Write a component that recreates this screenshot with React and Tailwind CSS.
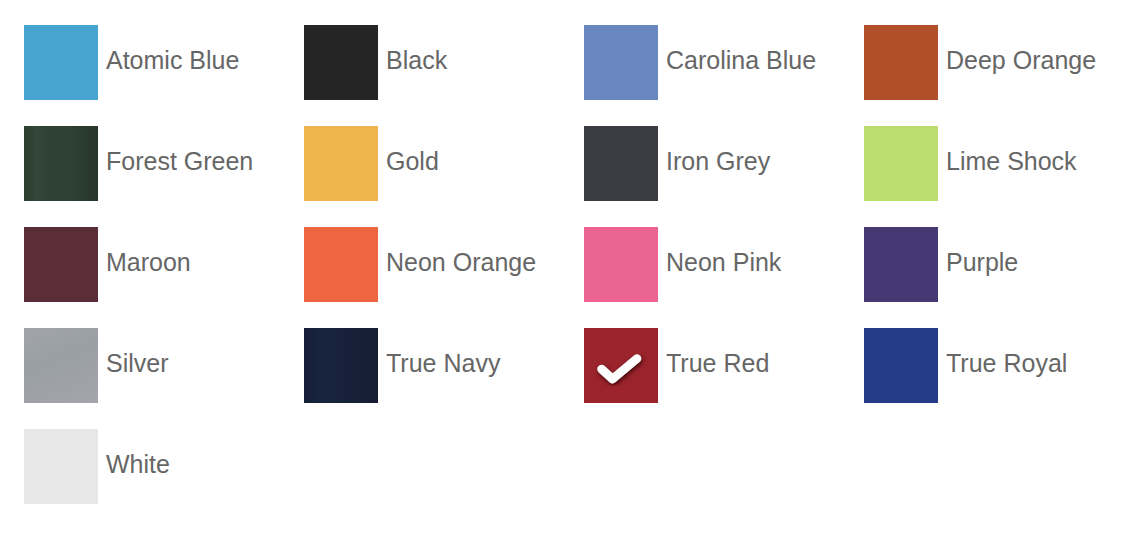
import React from 'react';

const colors = [
  { name: 'Atomic Blue', bg: 'bg-[#47a4d0]' },
  { name: 'Black', bg: 'bg-[#252525]' },
  { name: 'Carolina Blue', bg: 'bg-[#6887c0]' },
  { name: 'Deep Orange', bg: 'bg-[#b04f2a]' },
  { name: 'Forest Green', bg: 'bg-[linear-gradient(90deg,#2c3f2f_0%,#33473a_18%,#2d4031_35%,#2e4132_60%,#27372b_100%)]' },
  { name: 'Gold', bg: 'bg-[#f0b44f]' },
  { name: 'Iron Grey', bg: 'bg-[#3c3d42]' },
  { name: 'Lime Shock', bg: 'bg-[#bbdc6e]' },
  { name: 'Maroon', bg: 'bg-[#5a2d37]' },
  { name: 'Neon Orange', bg: 'bg-[#ee6541]' },
  { name: 'Neon Pink', bg: 'bg-[#ec6592]' },
  { name: 'Purple', bg: 'bg-[#463873]' },
  { name: 'Silver', bg: 'bg-[linear-gradient(160deg,#a1a5ab_0%,#9a9ea5_40%,#9ea2a8_70%,#a3a7ad_100%)]' },
  { name: 'True Navy', bg: 'bg-[linear-gradient(90deg,#151e37_0%,#19243f_25%,#172139_55%,#141d34_100%)]' },
  { name: 'True Red', bg: 'bg-[#9b232b]', checked: true },
  { name: 'True Royal', bg: 'bg-[#253c8b]' },
  { name: 'White', bg: 'bg-[#e7e7e7]' },
];

function Check() {
  return (
    <svg className="absolute inset-0 w-full h-full" viewBox="0 0 74 75">
      <defs>
        <filter id="checkShadow" x="-30%" y="-30%" width="160%" height="160%">
          <feGaussianBlur in="SourceAlpha" stdDeviation="2" />
          <feOffset dx="0.5" dy="1.5" result="blur" />
          <feFlood floodColor="#2a0608" floodOpacity="0.85" />
          <feComposite in2="blur" operator="in" />
          <feMerge>
            <feMergeNode />
            <feMergeNode in="SourceGraphic" />
          </feMerge>
        </filter>
      </defs>
      <polyline
        points="17.5,41 28.5,51 53,30.5"
        fill="none"
        stroke="#fff"
        strokeWidth="8.5"
        strokeLinecap="round"
        strokeLinejoin="round"
        filter="url(#checkShadow)"
      />
    </svg>
  );
}

export default function App() {
  return (
    <div className="w-[1124px] h-[533px] bg-white pl-6 pt-[25px] font-['Liberation_Sans',Arial,sans-serif]">
      <div className="grid grid-cols-[repeat(4,280px)] gap-y-[26px]">
        {colors.map((c) => (
          <div key={c.name} className="flex items-center">
            <div className={`relative w-[74px] h-[75px] shrink-0 ${c.bg}`}>
              {c.checked && <Check />}
            </div>
            <span className="ml-2 pb-[4px] text-[25px] text-[#666666] leading-none">
              {c.name}
            </span>
          </div>
        ))}
      </div>
    </div>
  );
}
